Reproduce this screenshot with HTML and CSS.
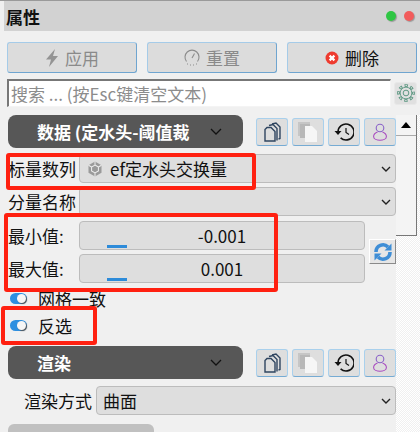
FILE: index.html
```html
<!DOCTYPE html>
<html lang="zh-CN">
<head>
  <meta charset="UTF-8" />
  <title>属性</title>
  <link rel="stylesheet" href="styles.css">
</head>
<body>
  <div class="panel">
    <div class="titlebar">
      <span class="title">属性</span>
      <span class="dot dot-green"></span>
      <span class="dot dot-red"></span>
    </div>

    <div class="actions">
      <button class="action disabled">
        <svg width="14" height="20" viewBox="0 0 14 20"><path d="M10 1 1 11.500h5L4 19l9-11H8z" fill="#949494"/></svg>
        应用
      </button>
      <button class="action disabled">
        <svg width="16" height="18" viewBox="0 0 16 18" fill="none" stroke="#8c8c8c" stroke-width="1.100"><path d="M2.500 12.500a7 7 0 1 1 11 0"/><path d="M8 9 10.500 4.500"/><path d="M3 15h1M6 16h1M9 16h1M12 15h1"/></svg>
        重置
      </button>
      <button class="action">
        <svg width="14" height="14" viewBox="0 0 14 14"><circle cx="7" cy="7" r="6.500" fill="#ee3b2f"/><path d="M4.600 4.600l4.800 4.800M9.400 4.600 4.600 9.400" stroke="#fff" stroke-width="2.200"/></svg>
        删除
      </button>
    </div>

    <div class="search-row">
      <input class="search" type="text" placeholder="搜索 ... (按Esc键清空文本)" />
      <button class="gear-btn">
        <svg width="18" height="18" viewBox="0 0 24 24" fill="none">
          <circle cx="12" cy="12" r="10" stroke="#5a9680" stroke-width="3.600" stroke-dasharray="4.400 3.454" stroke-dashoffset="2.200"/>
          <circle cx="12" cy="12" r="10" stroke="#e0e0e0" stroke-width="1.400" stroke-dasharray="2 5.854" stroke-dashoffset="1"/>
          <circle cx="12" cy="12" r="7.800" fill="#e0e0e0" stroke="#5a9680" stroke-width="1.200"/>
          <circle cx="12" cy="12" r="3.800" stroke="#5a9680" stroke-width="1.300"/>
        </svg>
      </button>
    </div>

    <div class="body">
      <div class="content">
        <div class="section-row">
          <div class="section-head">
            <span>数据 (定水头-阈值裁</span>
            <svg class="chev" width="12" height="7" viewBox="0 0 12 7" fill="none" stroke="#111" stroke-width="1.300"><path d="M1 1l5 5 5-5"/></svg>
          </div>
          <div class="tools">
            <button class="tool"><svg width="17" height="20" viewBox="0 0 17 20" fill="none" stroke="#2f4560" stroke-width="1.400"><path d="M8 2 12 1l4 4v11.500l-1.500 .5"/><path d="M5 3.500 9 2.500l4 4v12"/><path d="M1 7.500 3 5.500h4l4 4v9.500H1z" fill="#dedede"/></svg></button>
            <button class="tool"><svg width="20" height="20" viewBox="0 0 20 20"><rect x="0" y="0" width="12" height="14" fill="#c6c6c6"/><rect x="2" y="2" width="10" height="14" fill="#b8b8b8"/><path d="M7 4h7l5 5v11H7z" fill="#f6f6f6"/></svg></button>
            <button class="tool"><svg width="20" height="18" viewBox="0 0 20 18" fill="none" stroke="#111" stroke-width="1.600"><path d="M4 9a8 8 0 1 1 2.600 5.900"/><path d="M.5 8h7L4 12z" fill="#111" stroke="none"/><path d="M12 5v4.500l3 2" stroke-width="1.200"/></svg></button>
            <button class="tool"><svg width="14" height="18" viewBox="0 0 14 18" fill="none" stroke-width="1.100"><circle cx="7" cy="5" r="3.800" stroke="#8a62c8"/><path d="M4.500 9C2 10 .6 11.500 .6 13.500.6 16 4 17.300 7 17.300s6.400-1.300 6.400-3.800C13.400 11.500 12 10 9.500 9" stroke="#a94cc0"/></svg></button>
          </div>
        </div>

        <div class="field">
          <label class="field-label">标量数列</label>
          <div class="combo">
            <svg class="cube" width="16" height="16" viewBox="0 0 14 14"><path d="M7 .5l5.700 3.200v6.600L7 13.500 1.300 10.300V3.700z" fill="#9a9a9a"/><path d="M7 3.500l3 1.800v3.400l-3 1.800-3-1.800V5.300zM7 .5v3M12.700 3.700 10 5.300M1.300 3.700 4 5.300M7 13.500v-3" fill="none" stroke="#ececec" stroke-width=".9"/></svg>
            <span class="combo-text">ef定水头交换量</span>
            <svg class="arrow" width="10" height="6" viewBox="0 0 10 6" fill="none" stroke="#222" stroke-width="1.400"><path d="M1 1l4 4 4-4"/></svg>
          </div>
        </div>

        <div class="field field-second">
          <label class="field-label">分量名称</label>
          <div class="combo">
            <svg class="arrow" width="10" height="6" viewBox="0 0 10 6" fill="none" stroke="#222" stroke-width="1.400"><path d="M1 1l4 4 4-4"/></svg>
          </div>
        </div>

        <div class="range">
          <div class="range-rows">
            <div class="field">
              <label class="field-label">最小值:</label>
              <div class="slider"><span class="tick"></span><span class="value">-0.001</span></div>
            </div>
            <div class="field">
              <label class="field-label">最大值:</label>
              <div class="slider"><span class="tick"></span><span class="value">0.001</span></div>
            </div>
          </div>
          <button class="sync">
            <svg width="20" height="20" viewBox="0 0 20 20" fill="none" stroke="#3f8ed6" stroke-width="3.600">
              <path d="M3 10a7 7 0 0 1 12-5"/>
              <path d="M17 10a7 7 0 0 1-12 5"/>
              <path d="M18.500 1.500v7h-7z" fill="#3f8ed6" stroke="none"/>
              <path d="M1.500 18.500v-7h7z" fill="#3f8ed6" stroke="none"/>
            </svg>
          </button>
        </div>

        <div class="switch-row"><span class="switch"></span>网格一致</div>
        <div class="switch-row switch-row-last"><span class="switch"></span>反选</div>

        <div class="section-row">
          <div class="section-head">
            <span>渲染</span>
            <svg class="chev" width="12" height="7" viewBox="0 0 12 7" fill="none" stroke="#111" stroke-width="1.300"><path d="M1 1l5 5 5-5"/></svg>
          </div>
          <div class="tools">
            <button class="tool"><svg width="17" height="20" viewBox="0 0 17 20" fill="none" stroke="#2f4560" stroke-width="1.400"><path d="M8 2 12 1l4 4v11.500l-1.500 .5"/><path d="M5 3.500 9 2.500l4 4v12"/><path d="M1 7.500 3 5.500h4l4 4v9.500H1z" fill="#dedede"/></svg></button>
            <button class="tool"><svg width="20" height="20" viewBox="0 0 20 20"><rect x="0" y="0" width="12" height="14" fill="#c6c6c6"/><rect x="2" y="2" width="10" height="14" fill="#b8b8b8"/><path d="M7 4h7l5 5v11H7z" fill="#f6f6f6"/></svg></button>
            <button class="tool"><svg width="20" height="18" viewBox="0 0 20 18" fill="none" stroke="#111" stroke-width="1.600"><path d="M4 9a8 8 0 1 1 2.600 5.900"/><path d="M.5 8h7L4 12z" fill="#111" stroke="none"/><path d="M12 5v4.500l3 2" stroke-width="1.200"/></svg></button>
            <button class="tool"><svg width="14" height="18" viewBox="0 0 14 18" fill="none" stroke-width="1.100"><circle cx="7" cy="5" r="3.800" stroke="#8a62c8"/><path d="M4.500 9C2 10 .6 11.500 .6 13.500.6 16 4 17.300 7 17.300s6.400-1.300 6.400-3.800C13.400 11.500 12 10 9.500 9" stroke="#a94cc0"/></svg></button>
          </div>
        </div>

        <div class="field field-render">
          <label class="field-label">渲染方式</label>
          <div class="combo">
            <span class="combo-text plain">曲面</span>
            <svg class="arrow" width="10" height="6" viewBox="0 0 10 6" fill="none" stroke="#222" stroke-width="1.400"><path d="M1 1l4 4 4-4"/></svg>
          </div>
        </div>

        <div class="next-head"></div>
      </div>

      <div class="side">
        <div class="scrollbar">
          <div class="scroll-up"></div>
        </div>
      </div>
    </div>
  </div>

  <!-- red marks drawn over the screenshot -->
  <div class="mark mark-a"></div>
  <div class="mark mark-b"></div>
  <div class="mark mark-c"></div>
</body>
</html>
```

FILE: styles.css
```css
* {
  box-sizing: border-box;
  margin: 0;
  padding: 0;
}

html, body {
  width: 420px;
  height: 432px;
  overflow: hidden;
}

body {
  position: relative;
  background: #f0f0f0;
  color: #111;
  font-family: "Noto Sans CJK SC", "Noto Sans", sans-serif;
  font-size: 17px;
}

button {
  font-family: inherit;
}

.panel {
  height: 432px;
  border-top: 1px solid #9a9a9a;
}

.titlebar {
  display: flex;
  align-items: center;
  height: 30px;
  margin-left: 4px;
  padding: 0 6px 0 2px;
  background: #d2d2d2;
}

.title {
  flex: 1;
  font-size: 17px;
  font-weight: 700;
  color: #111;
}

.dot {
  width: 10px;
  height: 10px;
  border-radius: 50%;
  margin-left: 8px;
  box-shadow: 1px 1px 1px #999;
}

.dot-green {
  background: #2fc644;
}

.dot-red {
  background: #f25c5c;
}

.actions {
  display: flex;
  gap: 10px;
  margin: 11px 3px 0 7px;
}

.action {
  flex: 1;
  display: flex;
  align-items: center;
  justify-content: center;
  gap: 6px;
  height: 31px;
  background: #dcdcdc;
  border: 1px solid #a5cbe8;
  border-bottom-color: #6fa5d0;
  border-right-color: #6fa5d0;
  border-radius: 3px;
  font-size: 17px;
  color: #111;
}

.action.disabled {
  color: #8a8a8a;
}

.search-row {
  display: flex;
  align-items: center;
  gap: 3px;
  margin: 6px 3px 0 7px;
}

.search {
  flex: 1;
  height: 28px;
  min-width: 0;
  padding: 0 2px;
  background: #fff;
  border: 1px solid #f4f4f4;
  border-top: 2px solid #777;
  border-left: 2px solid #777;
  font-family: inherit;
  font-size: 17px;
}

.search::placeholder {
  color: #8c8c8c;
  opacity: 1;
}

.gear-btn {
  display: flex;
  align-items: center;
  justify-content: center;
  width: 23px;
  height: 23px;
  background: #e0e0e0;
  border: 1px solid #e8e8e8;
  border-radius: 3px;
}

.body {
  display: flex;
  height: 325px;
  margin-top: 8px;
}

.content {
  width: 396px;
  padding-left: 8px;
}

.section-row {
  display: flex;
  align-items: center;
  gap: 13px;
}

.section-head {
  display: flex;
  align-items: center;
  justify-content: space-between;
  width: 235px;
  height: 33px;
  padding: 0 21px 0 29px;
  background: #575757;
  border-radius: 8px;
  color: #fff;
  font-weight: 700;
  font-size: 17px;
  white-space: nowrap;
}

.tools {
  display: flex;
  gap: 4px;
}

.tool {
  display: flex;
  align-items: center;
  justify-content: center;
  width: 32px;
  height: 28px;
  background: #dedede;
  border: 1px solid #a9d0ec;
  border-bottom-color: #76abd3;
  border-radius: 3px;
}

.field {
  display: flex;
  align-items: center;
  height: 29px;
  margin-top: 6px;
}

.field-second {
  margin-top: 4px;
}

.field-label {
  width: 71px;
  white-space: nowrap;
  line-height: 1;
}

.combo {
  flex: 1;
  display: flex;
  align-items: center;
  height: 100%;
  padding: 0 4px 0 7px;
  background: #dedede;
  border: 1px solid #bcbcbc;
  border-radius: 4px;
}

.cube {
  margin-right: 7px;
}

.combo-text {
  flex: 1;
}

.combo-text.plain {
  margin-left: -1px;
}

.arrow {
  margin-left: auto;
}

.range {
  display: flex;
  align-items: center;
  gap: 4px;
}

.range-rows {
  width: 357px;
  padding-top: 1px;
}

.range-rows .field {
  margin-top: 4px;
}

.slider {
  flex: 1;
  display: flex;
  justify-content: center;
  align-items: center;
  position: relative;
  height: 100%;
  background: #dedede;
  border: 1px solid #bcbcbc;
  border-radius: 4px;
}

.value {
  font-size: 17px;
}

.tick {
  position: absolute;
  left: 27px;
  bottom: 1px;
  width: 20px;
  height: 3px;
  background: #2d8bd9;
}

.sync {
  display: flex;
  align-items: center;
  justify-content: center;
  width: 27px;
  height: 25px;
  margin-top: 4px;
  background: #e6e6e6;
  border: 1px solid;
  border-color: #fff #8a8a8a #8a8a8a #fff;
}

.switch-row {
  display: flex;
  align-items: center;
  height: 27px;
  margin-top: 2px;
  padding-left: 2px;
}

.switch-row-last {
  margin-top: 0;
  margin-bottom: 7px;
}

.switch {
  position: relative;
  flex: none;
  width: 17px;
  height: 11px;
  margin-right: 11px;
  background: #2d8fe0;
  border-radius: 6px;
}

.switch::after {
  content: "";
  position: absolute;
  right: 1px;
  top: 1px;
  width: 9px;
  height: 9px;
  background: #f6f6f6;
  box-shadow: 1px 1px 1px #555;
  border-radius: 50%;
}

.field-render {
  margin-top: 7px;
}

.field-render .field-label {
  width: 72px;
  margin-left: 16px;
}

.next-head {
  width: 146px;
  height: 20px;
  margin-top: 9px;
  background: #c0c0c0;
  border-radius: 6px 6px 0 0;
}

.side {
  flex: 1;
  background: repeating-conic-gradient(#fff 0 25%, #f0f0f0 0 50%) 0 0 / 2px 2px;
}

.scrollbar {
  width: 21px;
  height: 121px;
  background: #f4f4f4;
  border-right: 1px solid #777;
  border-bottom: 1px solid #777;
}

.scroll-up {
  position: relative;
  height: 21px;
  border-bottom: 1px solid #aaa;
}

.scroll-up::after {
  content: "";
  position: absolute;
  left: 5px;
  top: 7px;
  border-left: 5px solid transparent;
  border-right: 5px solid transparent;
  border-bottom: 6px solid #000;
}

.mark {
  position: absolute;
  border: 4px solid #ff2010;
  border-radius: 3px;
}

.mark-a {
  left: 6px;
  top: 153px;
  width: 250px;
  height: 37px;
}

.mark-b {
  left: 4px;
  top: 213px;
  width: 274px;
  height: 79px;
}

.mark-c {
  left: 1px;
  top: 306px;
  width: 96px;
  height: 39px;
}
```
